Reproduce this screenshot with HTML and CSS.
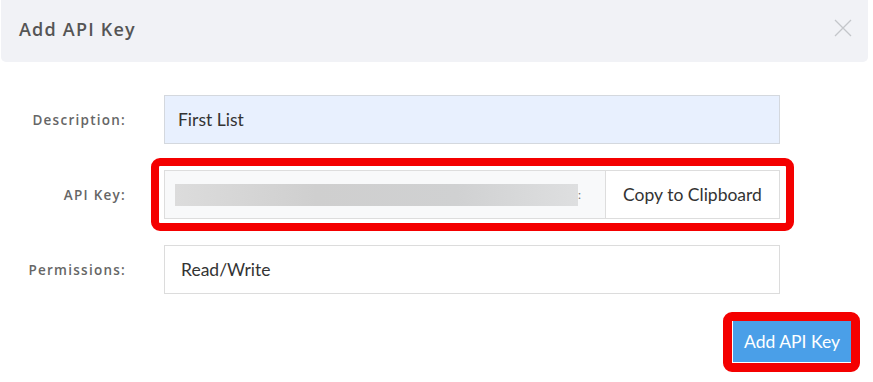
FILE: index.html
```html
<!DOCTYPE html>
<html>
<head>
<meta charset="utf-8">
<link rel="stylesheet" href="styles.css">
</head>
<body>
<div class="modal">
  <div class="modal-header">
    <h4 class="modal-title">Add API Key</h4>
    <button class="close" aria-label="Close">
      <svg width="18" height="18" viewBox="0 0 18 18"><path d="M1 1L17 17M17 1L1 17" stroke="#c4c6ca" stroke-width="1.3" fill="none"/></svg>
    </button>
  </div>
  <div class="modal-body">
    <div class="form-row">
      <label class="label">Description:</label>
      <div class="field field-autofill">First List</div>
    </div>
    <div class="form-row">
      <label class="label">API Key:</label>
      <div class="input-group highlight">
        <div class="key-field"><span class="blur"></span><span class="tail">:</span></div>
        <div class="copy-btn">Copy to Clipboard</div>
      </div>
    </div>
    <div class="form-row">
      <label class="label">Permissions:</label>
      <div class="field field-plain">Read/Write</div>
    </div>
  </div>
  <div class="modal-footer">
    <button class="btn-primary highlight-btn">Add API Key</button>
  </div>
</div>
</body>
</html>
```
FILE: styles.css
```css
html, body {
  margin: 0;
  padding: 0;
  background: #fff;
}
body {
  width: 873px;
  height: 382px;
  overflow: hidden;
  font-family: Lato, "Open Sans", sans-serif;
}
.modal {
  width: 873px;
}
.modal-header {
  margin: 0 5px 0 1px;
  height: 62px;
  background: #f1f2f6;
  border-radius: 0 0 5px 5px;
  display: flex;
  align-items: center;
  justify-content: space-between;
  padding: 0 16px 0 18px;
  box-sizing: border-box;
}
.modal-title {
  margin: 0;
  font-family: "Open Sans", sans-serif;
  font-weight: 600;
  font-size: 18px;
  letter-spacing: 1.2px;
  color: #555;
  padding-bottom: 4px;
}
.close {
  background: none;
  border: 0;
  padding: 0;
  width: 18px;
  height: 18px;
  margin-top: -6px;
  display: flex;
}
.modal-body {
  padding: 33px 0 0 0;
  display: flex;
  flex-direction: column;
  gap: 26px;
}
.form-row {
  display: flex;
  align-items: center;
  gap: 38px;
}
.label {
  width: 126px;
  text-align: right;
  font-family: "Open Sans", sans-serif;
  font-weight: 600;
  font-size: 13.5px;
  color: #666;
  letter-spacing: 1.25px;
}
.field {
  width: 616px;
  height: 49px;
  box-sizing: border-box;
  border: 1px solid #dcdcdc;
  display: flex;
  align-items: center;
  font-size: 17.5px;
  color: #333;
}
.field-autofill {
  background: #e8f0fe;
  border-color: #d4d8de;
  padding-left: 13px;
}
.field-plain {
  background: #fff;
  padding-left: 16px;
}
.input-group {
  width: 616px;
  height: 49px;
  box-sizing: border-box;
  border: 1px solid #ddd;
  display: flex;
  position: relative;
}
.highlight::after {
  content: "";
  position: absolute;
  left: -14px;
  right: -15px;
  top: -13px;
  bottom: -13px;
  border: 8px solid #f40000;
  border-radius: 9px;
  pointer-events: none;
}
.key-field {
  flex: 1;
  background: #f8f9fa;
  display: flex;
  align-items: center;
  padding-left: 10px;
}
.blur {
  width: 403px;
  height: 22px;
  background: linear-gradient(90deg, #dcdcdc 0%, #cfcfcf 35%, #d0d1d2 70%, #dedfe0 100%);
}
.tail {
  font-size: 12px;
  color: #777;
}
.copy-btn {
  width: 173px;
  border-left: 1px solid #ddd;
  background: #fff;
  display: flex;
  align-items: center;
  justify-content: center;
  font-size: 17.5px;
  color: #333;
}
.modal-footer {
  display: flex;
  justify-content: flex-end;
  padding: 27px 22px 0 0;
}
.btn-primary {
  position: relative;
  width: 118px;
  height: 41px;
  background: #4a9fe8;
  color: #fff;
  border: 0;
  border-radius: 0;
  font-family: Lato, sans-serif;
  font-size: 17.5px;
  padding: 0;
}
.highlight-btn::after {
  content: "";
  position: absolute;
  left: -10px;
  right: -9px;
  top: -9px;
  bottom: -10px;
  border: 9px solid #f40000;
  border-radius: 9px;
  pointer-events: none;
}
```
